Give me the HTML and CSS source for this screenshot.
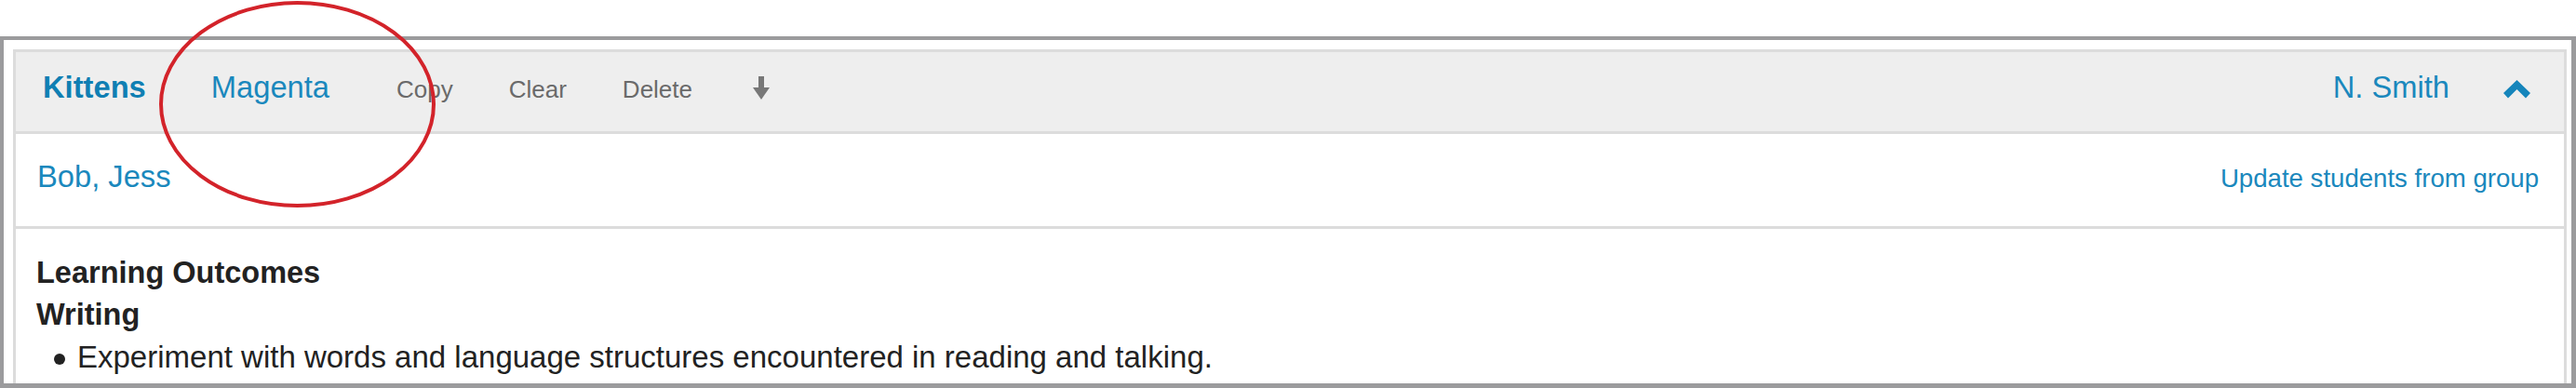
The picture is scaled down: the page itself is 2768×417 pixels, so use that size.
FILE: index.html
```html
<!DOCTYPE html>
<html lang="en">
<head>
<meta charset="utf-8">
<title>Kittens</title>
<link rel="stylesheet" href="styles.css">
</head>
<body>
<div class="frame">
  <div class="panel">
    <div class="head">
      <div class="head-left">
        <a class="title">Kittens</a>
        <a class="group">Magenta</a>
        <div class="actions">
          <a class="action">Copy</a>
          <a class="action">Clear</a>
          <a class="action">Delete</a>
          <span class="icon-wrap"><svg class="arrow" width="18" height="25" viewBox="0 0 18 25"><rect x="6" y="0" width="6" height="14" fill="#777"/><polygon points="0,12 18,12 9,25" fill="#777"/></svg></span>
        </div>
      </div>
      <div class="head-right">
        <a class="teacher">N. Smith</a>
        <span class="icon-wrap"><svg class="chevron" width="29" height="20" viewBox="0 0 29 20"><polygon points="14.5,0 29,14 24,19.5 14.5,10 5,19.5 0,14" fill="#1585bb"/></svg></span>
      </div>
    </div>
    <div class="students">
      <a class="names">Bob, Jess</a>
      <a class="update">Update students from group</a>
    </div>
    <div class="content">
      <div class="heading">Learning Outcomes</div>
      <div class="heading">Writing</div>
      <ul class="outcomes">
        <li>Experiment with words and language structures encountered in reading and talking.</li>
      </ul>
    </div>
  </div>
</div>
<svg class="annotation" width="304" height="228" viewBox="0 0 304 228"><ellipse cx="151.5" cy="112" rx="146.5" ry="109" fill="none" stroke="#d3232a" stroke-width="4"/></svg>
</body>
</html>
```
FILE: styles.css
```css
html, body {
  margin: 0;
  padding: 0;
}
body {
  position: relative;
  width: 2768px;
  height: 417px;
  overflow: hidden;
  background: #fff;
  font-family: "Liberation Sans", Arial, sans-serif;
}
a {
  cursor: pointer;
}
.frame {
  margin-top: 39px;
  height: 378px;
  box-sizing: border-box;
  border: 4px solid #9b9b9d;
  border-right-width: 5px;
  border-bottom-width: 5px;
  padding: 10px 5px 0 10px;
  overflow: hidden;
}
.panel {
  height: 100%;
  box-sizing: border-box;
  border: 3px solid #dcdcdc;
  border-bottom: 0;
}
.head {
  height: 88px;
  box-sizing: border-box;
  padding: 19px 36px 0 29px;
  background: #eeeeee;
  border-bottom: 3px solid #dcdcdc;
  display: flex;
  justify-content: space-between;
  align-items: baseline;
}
.head-left {
  display: flex;
  align-items: baseline;
  gap: 70px;
}
.title {
  font-size: 32.7px;
  font-weight: bold;
  color: #0f7fb3;
}
.group {
  font-size: 32.7px;
  color: #1a88bd;
}
.actions {
  margin-left: 2px;
  display: flex;
  align-items: baseline;
  gap: 60px;
}
.action {
  font-size: 26px;
  color: #6a6a6a;
}
.icon-wrap {
  font-size: 26px;
  line-height: 1;
}
.arrow {
  margin-left: 5px;
  vertical-align: -2px;
}
.head-right {
  display: flex;
  align-items: baseline;
  gap: 58px;
}
.teacher {
  font-size: 32.7px;
  color: #1a88bd;
}
.chevron {
  vertical-align: -1px;
}
.students {
  height: 102px;
  box-sizing: border-box;
  padding: 27px 27px 0 23px;
  border-bottom: 3px solid #dcdcdc;
  display: flex;
  justify-content: space-between;
  align-items: baseline;
}
.names {
  font-size: 32.7px;
  color: #1a88bd;
}
.update {
  font-size: 27.6px;
  color: #1a88bd;
}
.content {
  padding: 25px 22px 0 22px;
  font-size: 33px;
  line-height: 45px;
  color: #222;
}
.heading {
  font-weight: bold;
  font-size: 32.5px;
}
.outcomes {
  list-style: none;
  margin: 0;
  padding: 0;
}
.outcomes li::before {
  content: "";
  display: inline-block;
  width: 12px;
  height: 12px;
  border-radius: 50%;
  background: #222;
  margin-left: 19px;
  margin-right: 13px;
  vertical-align: middle;
}
.annotation {
  position: absolute;
  left: 168px;
  top: 0;
}
```
